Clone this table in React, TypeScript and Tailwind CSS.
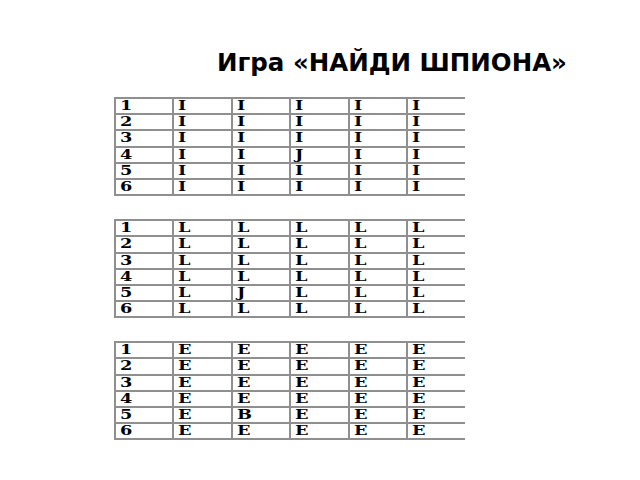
import React from "react";

const tables: string[][][] = [
  [
    ["1", "I", "I", "I", "I", "I"],
    ["2", "I", "I", "I", "I", "I"],
    ["3", "I", "I", "I", "I", "I"],
    ["4", "I", "I", "J", "I", "I"],
    ["5", "I", "I", "I", "I", "I"],
    ["6", "I", "I", "I", "I", "I"],
  ],
  [
    ["1", "L", "L", "L", "L", "L"],
    ["2", "L", "L", "L", "L", "L"],
    ["3", "L", "L", "L", "L", "L"],
    ["4", "L", "L", "L", "L", "L"],
    ["5", "L", "J", "L", "L", "L"],
    ["6", "L", "L", "L", "L", "L"],
  ],
  [
    ["1", "E", "E", "E", "E", "E"],
    ["2", "E", "E", "E", "E", "E"],
    ["3", "E", "E", "E", "E", "E"],
    ["4", "E", "E", "E", "E", "E"],
    ["5", "E", "B", "E", "E", "E"],
    ["6", "E", "E", "E", "E", "E"],
  ],
];

function Table({ rows }: { rows: string[][] }) {
  return (
    <div className="w-[351px] border-t-2 border-[#8f8f8f]">
      {rows.map((r, i) => (
        <div key={i} className="flex h-[16.2px] border-b-2 border-[#8f8f8f]">
          {r.map((c, j) => (
            <div
              key={j}
              className="w-[58.4px] shrink-0 border-l-2 border-[#8f8f8f] pl-[4px] font-['DejaVu_Serif',serif] text-[13px] leading-[14px] font-bold text-black"
            >
              <span className="inline-block origin-left scale-x-[1.36]">{c}</span>
            </div>
          ))}
        </div>
      ))}
    </div>
  );
}

export default function App() {
  return (
    <div className="w-[640px] h-[480px] bg-white overflow-hidden">
      <div className="pt-[48px] pl-[217px] font-['DejaVu_Sans',sans-serif] text-[24.5px] leading-[29px] font-bold text-black whitespace-nowrap">
        Игра «НАЙДИ ШПИОНА»
      </div>
      <div className="flex flex-col gap-[23px] pl-[114px] pt-[20px]">
        {tables.map((t, i) => (
          <Table key={i} rows={t} />
        ))}
      </div>
    </div>
  );
}
